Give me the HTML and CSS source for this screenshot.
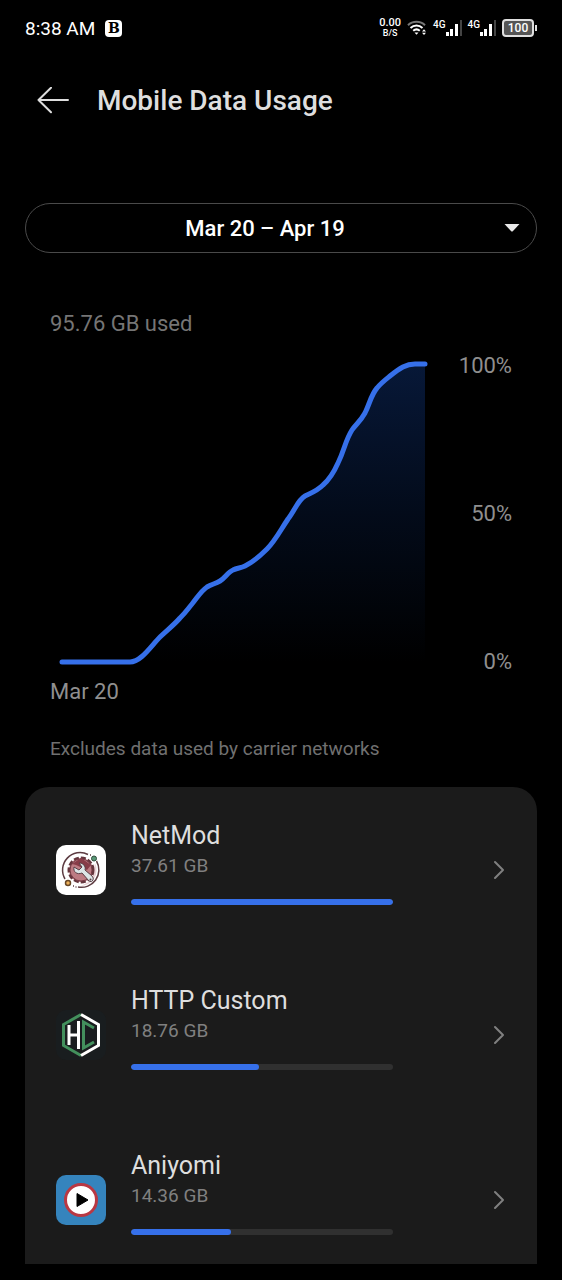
FILE: index.html
```html
<!DOCTYPE html>
<html lang="en">
<head>
<meta charset="utf-8">
<meta name="viewport" content="width=device-width, initial-scale=1">
<title>Mobile Data Usage</title>
<link rel="stylesheet" href="styles.css">
</head>
<body>
<div class="screen">
  <div class="status">
    <span class="clock">8:38 AM</span>
    <span class="badge">B</span>
    <div class="indicators">
      <span class="speed"><b>0.00</b><small>B/S</small></span>
      <svg class="wifi" width="20" height="16" viewBox="0 0 20 16" fill="none" stroke="#fff" stroke-width="2">
        <path d="M1 5.2C5.5 0.6 13.500 0.6 18 5.200" stroke="#777"/>
        <path d="M3.500 8C7 4.600 12 4.600 15.500 8"/>
        <path d="M6.200 10.800C8.300 9 10.700 9 12.800 10.800"/>
        <path d="M7.500 12.500h4l-2 2.300z" fill="#fff" stroke="none"/>
        <path d="M15 11.600l2-2.300 2 2.300zM15 12.800l2 2.300 2-2.300z" fill="#fff" stroke="none"/>
      </svg>
      <span class="signal">4G<svg width="16" height="16" viewBox="0 0 16 16" fill="#fff"><rect x="0" y="12" width="3" height="4"/><rect x="4" y="9" width="3" height="7"/><rect x="9" y="4" width="3" height="12"/><rect x="14" y="0" width="2" height="16" fill="#444"/></svg></span>
      <span class="signal">4G<svg width="16" height="16" viewBox="0 0 16 16" fill="#fff"><rect x="0" y="12" width="3" height="4"/><rect x="4" y="9" width="3" height="7"/><rect x="9" y="4" width="3" height="12"/><rect x="14" y="0" width="2" height="16" fill="#444"/></svg></span>
      <span class="battery"><span class="cell">100</span><i class="tip"></i></span>
    </div>
  </div>

  <header class="bar">
    <button class="back" type="button" aria-label="Back">
      <svg width="32" height="28" viewBox="0 0 32 28" fill="none" stroke="#dedede" stroke-width="2" stroke-linecap="round" stroke-linejoin="round"><path d="M31 13H1.500M14 0.800L1.500 13L14 25.200"/></svg>
    </button>
    <h1 class="title">Mobile Data Usage</h1>
  </header>

  <div class="period">
    <select class="period-select" aria-label="Billing period"><option>Mar 20 – Apr 19</option></select>
    <svg class="caret" width="16" height="8" viewBox="0 0 16 8"><path d="M0.500 0h15L8.800 7.200Q8 8 7.200 7.200z" fill="#e8e8e8"/></svg>
  </div>

  <section class="usage">
    <p class="total">95.76 GB used</p>
    <div class="chart">
      <svg class="plot" viewBox="0 0 380 322" role="img" aria-label="Cumulative data usage">
        <defs><linearGradient id="fade" x1="0" y1="0" x2="0" y2="1"><stop offset="0" stop-color="#071838"/><stop offset="0.500" stop-color="#030b1a"/><stop offset="1" stop-color="#000"/></linearGradient></defs>
        <path fill="url(#fade)" d="M82 309C91 309 101 293 110 284C117 277 123 273 130 265C136 259 137 257 142 251C147 245 151 238 157 234C162 231 165 231 170 228C175 225 178 219 183 217C187 215 191 215 195 213C203 209 210 203 217 196C225 188 230 178 238 166C245 157 248 147 255 143C261 140 267 138 273 132C280 126 284 119 288 110C295 96 295 88 302 77C306 71 310 69 315 60C320 50 321 42 327 35C331 30 335 27 340 23C350 15 356 11 365 11H375V309Z"/>
        <path fill="none" stroke="#3670ea" stroke-width="5" stroke-linecap="round" d="M12 309H80C91 309 101 293 110 284C117 277 123 273 130 265C136 259 137 257 142 251C147 245 151 238 157 234C162 231 165 231 170 228C175 225 178 219 183 217C187 215 191 215 195 213C203 209 210 203 217 196C225 188 230 178 238 166C245 157 248 147 255 143C261 140 267 138 273 132C280 126 284 119 288 110C295 96 295 88 302 77C306 71 310 69 315 60C320 50 321 42 327 35C331 30 335 27 340 23C350 15 356 11 365 11H375"/>
      </svg>
      <div class="scale"><span>100%</span><span>50%</span><span>0%</span></div>
    </div>
    <p class="start">Mar 20</p>
    <p class="note">Excludes data used by carrier networks</p>
  </section>

  <ul class="apps">
    <li><a class="app" href="#netmod">
      <svg class="icon" width="50" height="50" viewBox="0 0 50 50" fill="none">
        <rect width="50" height="50" rx="10" fill="#fff"/>
        <path d="M32 9.500A17.500 17.500 0 0 0 9 34M40.500 16A17.500 17.500 0 0 1 22 42" stroke="#5d3c42" stroke-width="1.500"/>
        <path d="M34 10h1M17 41h1M19.500 42h1" stroke="#5d3c42" stroke-width="1.500"/>
        <path d="M39 18A16 16 0 0 1 25 41L36 35Z" fill="#ead2d6"/>
        <circle cx="25" cy="25" r="12" fill="#bd7b83" stroke="#65353d" stroke-width="3" stroke-dasharray="5 2"/>
        <circle cx="25" cy="25" r="11" fill="#bd7b83" stroke="#793d48"/>
        <path d="M16 19L25 13L35 20L31 25L20 20Z" fill="#873c48"/>
        <path d="M18 22C17 27 21 30 26 28L33 36Q36 38 37 35Q38 33 36 31L29 25C30 21 27 18 23 18L26 22L23 25Z" fill="#dce5e7" stroke="#593e45"/>
        <circle cx="34.500" cy="34.500" r="1" fill="#593e45"/>
        <circle cx="38" cy="13.500" r="2.500" fill="#599876" stroke="#304c3d"/>
        <circle cx="12" cy="38" r="2.500" fill="#edb15c" stroke="#684725" stroke-width="1.500"/>
      </svg>
      <span class="info"><span class="name">NetMod</span><span class="size">37.61 GB</span><span class="meter"><i class="fill" style="width:100%"></i></span></span>
      <svg class="chevron" width="12" height="20" viewBox="0 0 12 20"><path d="M2 2L10 10L2 18"/></svg>
    </a></li>
    <li><a class="app" href="#http-custom">
      <svg class="icon" width="50" height="50" viewBox="0 0 50 50" fill="none" stroke-width="3">
        <rect width="50" height="50" rx="10" fill="#191d1f"/>
        <path d="M25 4.500L7.500 14.500V35.500L25 45.500" stroke="#43905d"/>
        <path d="M25 4.500L42.500 14.500V35.500L25 45.500" stroke="#fff"/>
        <path d="M13 15V35M13 25H22.500M22.500 11V39" stroke="#fff"/>
        <path d="M38 18L27.500 12V38L38 32" stroke="#43905d"/>
      </svg>
      <span class="info"><span class="name">HTTP Custom</span><span class="size">18.76 GB</span><span class="meter"><i class="fill" style="width:49%"></i></span></span>
      <svg class="chevron" width="12" height="20" viewBox="0 0 12 20"><path d="M2 2L10 10L2 18"/></svg>
    </a></li>
    <li><a class="app" href="#aniyomi">
      <svg class="icon" width="50" height="50" viewBox="0 0 50 50">
        <rect width="50" height="50" rx="10" fill="#3584bd"/>
        <circle cx="25" cy="25" r="15.500" fill="#fff" stroke="#b93843" stroke-width="3"/>
        <path d="M21 18.500L32 25L21 31.500Z" fill="#000" stroke="#000" stroke-linejoin="round"/>
      </svg>
      <span class="info"><span class="name">Aniyomi</span><span class="size">14.36 GB</span><span class="meter"><i class="fill" style="width:38%"></i></span></span>
      <svg class="chevron" width="12" height="20" viewBox="0 0 12 20"><path d="M2 2L10 10L2 18"/></svg>
    </a></li>
  </ul>
</div>
</body>
</html>
```
FILE: styles.css
```css
* { box-sizing: border-box; }
body { margin: 0; background: #000; color: #dedede; font-family: Roboto, sans-serif; }
p, h1, ul { margin: 0; padding: 0; }
svg { display: block; flex: none; }
.screen { display: flex; flex-direction: column; height: 100vh; overflow: hidden; padding: 0 25px 16px; }
.screen > * { flex: none; }

.status { display: flex; align-items: center; height: 56px; color: #fff; }
.clock { font-size: 19px; }
.badge { display: grid; place-items: center; width: 17px; height: 17px; margin-left: 10px; border-radius: 4px; background: #fff; color: #000; font: bold 14px/17px "DejaVu Serif", serif; }
.indicators { display: flex; align-items: center; gap: 6px; margin-left: auto; }
.speed { display: flex; flex-direction: column; align-items: center; line-height: 10px; font-size: 11px; }
.speed b { font-weight: 500; }
.speed small { font-size: 9px; font-weight: 500; }
.signal { display: flex; font-size: 10px; font-weight: 500; line-height: 10px; }
.battery { display: flex; align-items: center; gap: 1px; }
.cell { width: 32px; height: 18px; border: 2px solid #e0e0e0; border-radius: 4px; background: #555; color: #fff; font-size: 12px; font-weight: 500; line-height: 14px; text-align: center; }
.tip { width: 2px; height: 6px; background: #e0e0e0; }

.bar { display: flex; align-items: center; gap: 28px; height: 90px; padding-left: 12px; }
.back { padding: 0; border: 0; background: none; }
.title { font-size: 28px; font-weight: 500; line-height: 36px; }

.period { position: relative; margin-top: 57px; }
.period-select { display: block; width: 100%; height: 50px; padding: 0 32px 0 0; border: 1px solid #4a4a4a; border-radius: 25px; appearance: none; background: #000; color: #fff; font: 500 22px Roboto, sans-serif; text-align: center; text-align-last: center; }
.caret { position: absolute; top: 21px; right: 17px; pointer-events: none; }

.usage { padding: 58px 25px 26px; font-size: 22px; line-height: 26px; color: #8f8f8f; }
.total { color: #757575; }
.chart { display: grid; grid-template-columns: 1fr 60px; gap: 22px; margin-top: 16px; }
.plot { width: 100%; }
.scale { display: flex; flex-direction: column; justify-content: space-between; text-align: right; }
.start { margin-top: 4px; }
.note { margin-top: 32px; color: #707070; font-size: 19px; line-height: 24px; }

.screen > .apps { flex: 1 1 0; min-height: 0; overflow: hidden; border-radius: 24px 24px 0 0; background: #1b1b1b; list-style: none; }
.app { display: grid; grid-template-columns: 50px minmax(0, 262px) 1fr; column-gap: 25px; align-items: center; height: 165px; padding: 0 32px 0 31px; color: inherit; text-decoration: none; }
.info { display: flex; flex-direction: column; padding-bottom: 14px; }
.name { font-size: 25px; line-height: 32px; }
.size { color: #808080; font-size: 19px; line-height: 28px; }
.meter { height: 6px; margin-top: 19px; overflow: hidden; border-radius: 3px; background: #303030; }
.fill { display: block; height: 6px; border-radius: 3px; background: #3670ea; }
.chevron { justify-self: end; fill: none; stroke: #808080; stroke-width: 2; stroke-linecap: round; stroke-linejoin: round; }
```
